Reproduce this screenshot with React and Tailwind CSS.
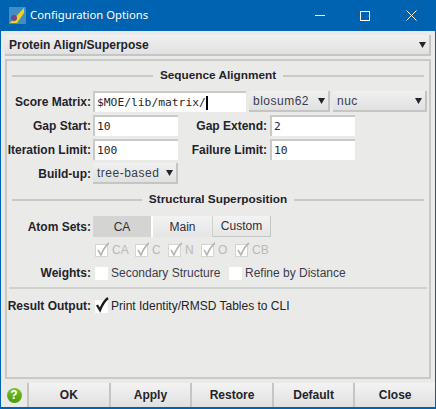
const sans = "font-['Liberation_Sans',sans-serif]"
const mono = "font-['DejaVu_Sans_Mono',monospace]"

const Label = ({ children, className = 'w-[84px]' }) => (
  <div className={`${className} shrink-0 whitespace-nowrap flex justify-end text-[12px] font-bold text-[#23232b] leading-none`}>{children}</div>
)

const Input = ({ value, className = 'w-[85px]', caret }) => (
  <div className={`${className} shrink-0 h-[21px] flex items-center bg-white border-t-2 border-l-2 border-[#c8cac8] pl-[2px] text-[11.3px] text-[#26262e] leading-none ${mono}`}>
    {value}
    {caret && <span className="w-[2px] h-[14px] bg-black" />}
  </div>
)

const Arrow = () => (
  <svg width="7" height="6" viewBox="0 0 7 6" className="shrink-0">
    <path d="M0 0h7L3.5 6z" fill="#24242a" />
  </svg>
)

const Select = ({ value, className, bold }) => (
  <div className={`${className} shrink-0 flex items-center justify-between bg-gradient-to-b from-[#eff0ef] to-[#e0e1e0] border-r-2 border-b-2 border-[#c4c6c4] pl-[4px] pr-[3px] text-[12px] leading-none ${bold ? 'font-bold text-[#23232b]' : 'text-[#3c3c4a] tracking-[0.5px]'}`}>
    <span>{value}</span>
    <Arrow />
  </div>
)

const Heading = ({ children, left, right }) => (
  <div className="flex items-center h-[16px]">
    <div className={`${left} h-[2px] bg-[#c8cac8]`} />
    <div className="flex-1 text-center text-[11.8px] font-bold text-[#23232b] leading-none">{children}</div>
    <div className={`${right} h-[2px] bg-[#c8cac8]`} />
  </div>
)

const Box = ({ checked, disabled }) => (
  <div className={`relative w-[13px] h-[13px] shrink-0 bg-white ${disabled ? 'border border-[#d4d6d4]' : ''}`}>
    {checked && (
      <svg width="14" height="16" viewBox="0 0 14 16" className="absolute -top-[3px] left-0">
        <path d="M2 8l3 5C7 8 9 4 13 1" fill="none" stroke={disabled ? '#b4b6b4' : '#1c1c1e'} strokeWidth={disabled ? 1.6 : 2.4} />
      </svg>
    )}
  </div>
)

const Atom = ({ name, className }) => (
  <div className={`flex items-center gap-[4px] ${className}`}>
    <Box checked disabled />
    <span className="text-[12px] text-[#b8bab8] leading-none">{name}</span>
  </div>
)

const FootButton = ({ children }) => (
  <div className="flex-1 h-[24px] flex items-center justify-center bg-gradient-to-b from-[#f2f3f2] to-[#dfe0df] border-l-2 border-[#c4c6c4] text-[12px] font-bold text-[#23232b] leading-none">
    {children}
  </div>
)

export default function App() {
  return (
    <div className={`w-[436px] h-[409px] flex flex-col bg-[#eaebe9] border-x border-b-2 border-[#0063b1] ${sans}`}>
      {/* title bar */}
      <div className="h-[31px] -mx-px shrink-0 flex items-center bg-[#0063b1] text-white">
        <svg width="17" height="17" viewBox="0 0 17 17" className="ml-[9px]">
          <rect width="17" height="17" fill="#3f8fc4" />
          <path d="M1 16L15 1v5L8 16z" fill="#f3d21c" />
          <path d="M0 16l9-3-1 3z" fill="#f3d21c" />
          <circle cx="5" cy="11" r="3" fill="#6a4a8c" />
        </svg>
        <span className="ml-[4px] text-[11.3px] font-['Noto_Sans',sans-serif]">Configuration Options</span>
        <div className="ml-auto flex items-center">
          <div className="w-[10px] h-px bg-white mr-[35px]" />
          <div className="w-[10px] h-[10px] border border-white mr-[36px]" />
          <svg width="11" height="11" viewBox="0 0 11 11" className="mr-[19px]">
            <path d="M0.5 0.5l10 10M10.5 0.5l-10 10" stroke="#fff" strokeWidth="1" />
          </svg>
        </div>
      </div>

      <div className="flex-1 flex flex-col px-[4px] pt-[4px]">
        <Select value="Protein Align/Superpose" bold className="h-[21px]" />

        <div className="mt-[3px] h-[320px] border-2 border-[#c8cac8] pt-[7px]">
          <div className="px-[5px]"><Heading left="w-[141px]" right="w-[141px]">Sequence Alignment</Heading></div>

          <div className="mt-[7px] flex items-center gap-[2px]">
            <Label>Score Matrix:</Label>
            <Input value="$MOE/lib/matrix/" caret className="w-[153px]" />
            <Select value="blosum62" className="ml-[1px] w-[81px] h-[21px]" />
            <Select value="nuc" className="ml-[1px] w-[94px] h-[21px]" />
          </div>

          <div className="mt-[3px] flex items-center gap-[2px]">
            <Label>Gap Start:</Label>
            <Input value="10" />
            <Label className="w-[85px] ml-[2px] mr-px">Gap Extend:</Label>
            <Input value="2" />
          </div>

          <div className="mt-[3px] flex items-center gap-[2px]">
            <Label>Iteration Limit:</Label>
            <Input value="100" />
            <Label className="w-[85px] ml-[2px] mr-px">Failure Limit:</Label>
            <Input value="10" />
          </div>

          <div className="mt-[3px] flex items-center gap-[2px]">
            <Label>Build-up:</Label>
            <Select value="tree-based" className="w-[85px] h-[21px]" />
          </div>

          <div className="mt-[8px] px-[5px]"><Heading left="w-[130px]" right="w-[130px]">Structural Superposition</Heading></div>

          <div className="mt-[8px] flex items-center gap-[2px]">
            <Label>Atom Sets:</Label>
            <div className="flex h-[21px] text-[12px] text-[#2e2e3a] leading-none">
              <div className="w-[60px] flex items-center justify-center bg-[#d4d5d3] border-r-2 border-white">CA</div>
              <div className="w-[60px] flex items-center justify-center bg-gradient-to-b from-[#f2f3f2] to-[#e4e5e4] border-r border-[#d0d2d0]">Main</div>
              <div className="w-[58px] flex items-center justify-center bg-gradient-to-b from-[#f2f3f2] to-[#e4e5e4] border-r border-b border-[#c4c6c4]">Custom</div>
            </div>
          </div>

          <div className="mt-[5px] ml-[88px] flex items-center h-[16px]">
            <Atom name="CA" className="w-[40px]" />
            <Atom name="C" className="w-[33px]" />
            <Atom name="N" className="w-[33px]" />
            <Atom name="O" className="w-[34px]" />
            <Atom name="CB" />
          </div>

          <div className="mt-[7px] flex items-center h-[16px]">
            <Label>Weights:</Label>
            <div className="ml-[4px]"><Box /></div>
            <span className="ml-[3px] w-[118px] whitespace-nowrap text-[12px] text-[#3c3c4a] leading-none">Secondary Structure</span>
            <Box />
            <span className="ml-[3px] text-[12px] text-[#3c3c4a] leading-none">Refine by Distance</span>
          </div>

          <div className="mt-[6px] mx-[2px] h-[2px] bg-[#cfd1cf]" />

          <div className="mt-[9px] flex items-center h-[16px]">
            <Label>Result Output:</Label>
            <div className="ml-[4px]"><Box checked /></div>
            <span className="ml-[3px] text-[12px] text-[#23232b] leading-none">Print Identity/RMSD Tables to CLI</span>
          </div>
        </div>
      </div>

      <div className="h-[24px] shrink-0 flex items-center">
        <div className="w-[26px] shrink-0 flex items-center justify-center">
          <div className="w-[15px] h-[15px] rounded-full bg-gradient-to-b from-[#7cc42c] to-[#4a9a10] flex items-center justify-center text-white text-[12px] font-bold leading-none">?</div>
        </div>
        <FootButton>OK</FootButton>
        <FootButton>Apply</FootButton>
        <FootButton>Restore</FootButton>
        <FootButton>Default</FootButton>
        <FootButton>Close</FootButton>
      </div>
    </div>
  )
}
